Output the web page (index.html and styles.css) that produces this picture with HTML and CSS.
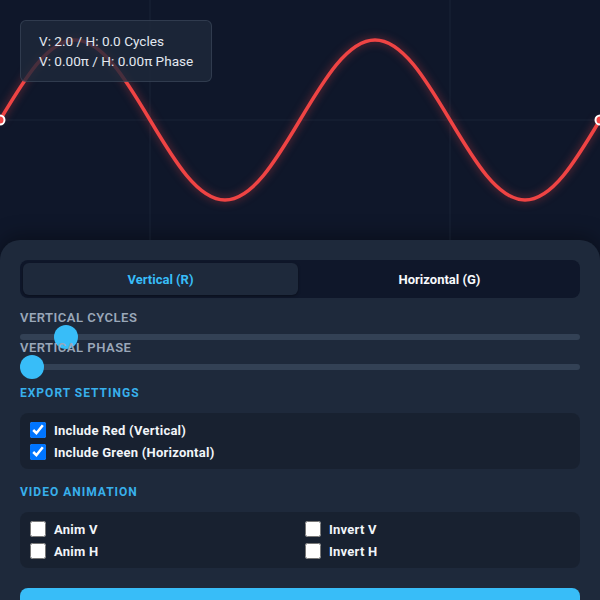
FILE: index.html
```html
<!DOCTYPE html>
<html lang="en">
<head>
  <meta charset="UTF-8">
  <title>Wave Generator</title>
  <link rel="stylesheet" href="styles.css">
</head>
<body>

  <div class="viz">
    <svg class="wave" width="600" height="240" viewBox="0 0 600 240">
      <line x1="0" y1="120" x2="600" y2="120" class="grid"/>
      <line x1="150" y1="0" x2="150" y2="240" class="grid"/>
      <line x1="450" y1="0" x2="450" y2="240" class="grid"/>
      <path class="curve" d="M0 120 C24.46 79.02 47.86 40 75 40 S125.54 79.02 150 120 S197.86 200 225 200 S275.54 160.98 300 120 S347.86 40 375 40 S425.54 79.02 450 120 S497.86 200 525 200 S575.54 160.98 600 120"/>
      <circle cx="0" cy="120" r="4.5" class="dot"/>
      <circle cx="600" cy="120" r="4.5" class="dot"/>
    </svg>
    <div class="info">
      V: 2.0 / H: 0.0 Cycles<br>
      V: 0.00π / H: 0.00π Phase
    </div>
  </div>

  <div class="panel">
    <div class="tabs">
      <button type="button" class="tab active">Vertical (R)</button>
      <button type="button" class="tab">Horizontal (G)</button>
    </div>

    <div class="control">
      <label class="control-label" for="cycles">Vertical Cycles</label>
      <input type="range" id="cycles" min="0" max="32" step="0.1" value="2">
    </div>
    <div class="control">
      <label class="control-label" for="phase">Vertical Phase</label>
      <input type="range" id="phase" min="0" max="2" step="0.01" value="0">
    </div>

    <h3 class="section-title">Export Settings</h3>
    <div class="box">
      <label class="check"><input type="checkbox" checked> Include Red (Vertical)</label>
      <label class="check"><input type="checkbox" checked> Include Green (Horizontal)</label>
    </div>

    <h3 class="section-title">Video Animation</h3>
    <div class="box box-grid">
      <label class="check"><input type="checkbox"> Anim V</label>
      <label class="check"><input type="checkbox"> Invert V</label>
      <label class="check"><input type="checkbox"> Anim H</label>
      <label class="check"><input type="checkbox"> Invert H</label>
    </div>

    <button type="button" class="export">Export Image</button>
  </div>

</body>
</html>
```

FILE: styles.css
```css
html, body {
  margin: 0;
  overflow: hidden;
}
body {
  font-family: Roboto, "Liberation Sans", sans-serif;
  background-color: #0f172a;
  color: #f1f5f9;
}
.viz {
  position: relative;
  height: 240px;
}
.wave {
  display: block;
}
.grid {
  stroke: rgba(148, 163, 184, 0.09);
  stroke-width: 1;
}
.curve {
  fill: none;
  stroke: #ef4444;
  stroke-width: 3.5;
  filter: drop-shadow(0 0 4px rgba(239, 68, 68, 0.55));
}
.dot {
  fill: #ef4444;
  stroke: #ffffff;
  stroke-width: 2;
}
.info {
  position: absolute;
  top: 20px;
  left: 20px;
  padding: 10px 18px;
  font-size: 13.6px;
  line-height: 20px;
  color: #e2e8f0;
  background-color: rgba(30, 41, 59, 0.8);
  border: 1px solid rgba(148, 163, 184, 0.18);
  border-radius: 6px;
}
.panel {
  background-color: #1e293b;
  border-radius: 20px 20px 0 0;
  padding: 20px;
  box-shadow: 0 -4px 20px rgba(0, 0, 0, 0.35);
}
.tabs {
  display: flex;
  gap: 4px;
  padding: 3px;
  background-color: #0f172a;
  border-radius: 8px;
  margin-bottom: 12px;
}
.tab {
  flex: 1;
  height: 32px;
  border: none;
  border-radius: 6px;
  background: transparent;
  color: #f8fafc;
  font-family: inherit;
  font-size: 13px;
  font-weight: 700;
  cursor: pointer;
}
.tab.active {
  background-color: #1e293b;
  color: #38bdf8;
  box-shadow: 0 1px 3px rgba(0, 0, 0, 0.35);
}
.control-label {
  display: block;
  font-size: 13px;
  line-height: 15px;
  font-weight: 600;
  letter-spacing: 0.5px;
  text-transform: uppercase;
  color: #9aa7b9;
  margin-bottom: 9px;
}
input[type="range"] {
  -webkit-appearance: none;
  appearance: none;
  display: block;
  width: 100%;
  height: 6px;
  margin: 0;
  border-radius: 3px;
  background-color: #334155;
  outline: none;
}
input[type="range"]::-webkit-slider-thumb {
  -webkit-appearance: none;
  appearance: none;
  width: 24px;
  height: 24px;
  border-radius: 50%;
  background-color: #38bdf8;
  border: none;
  cursor: pointer;
}
.section-title {
  margin: 15px 0 12px;
  font-size: 12px;
  line-height: 16px;
  font-weight: 700;
  letter-spacing: 1px;
  text-transform: uppercase;
  color: #38b0ec;
}
.box {
  display: flex;
  flex-direction: column;
  gap: 4px;
  padding: 8px 10px;
  background-color: rgba(0, 0, 0, 0.18);
  border-radius: 8px;
}
.box-grid {
  display: grid;
  grid-template-columns: 1fr 1fr;
  gap: 4px 10px;
}
.check {
  display: flex;
  align-items: center;
  gap: 8px;
  height: 18px;
  font-size: 13px;
  font-weight: 700;
  letter-spacing: 0.25px;
  color: #f1f5f9;
}
.check input {
  width: 16px;
  height: 16px;
  margin: 0;
}
.export {
  display: block;
  width: 100%;
  margin-top: 20px;
  height: 56px;
  border: none;
  border-radius: 8px;
  background-color: #38bdf8;
  color: #0f172a;
  font-family: inherit;
  font-size: 14px;
  font-weight: 700;
}
```
